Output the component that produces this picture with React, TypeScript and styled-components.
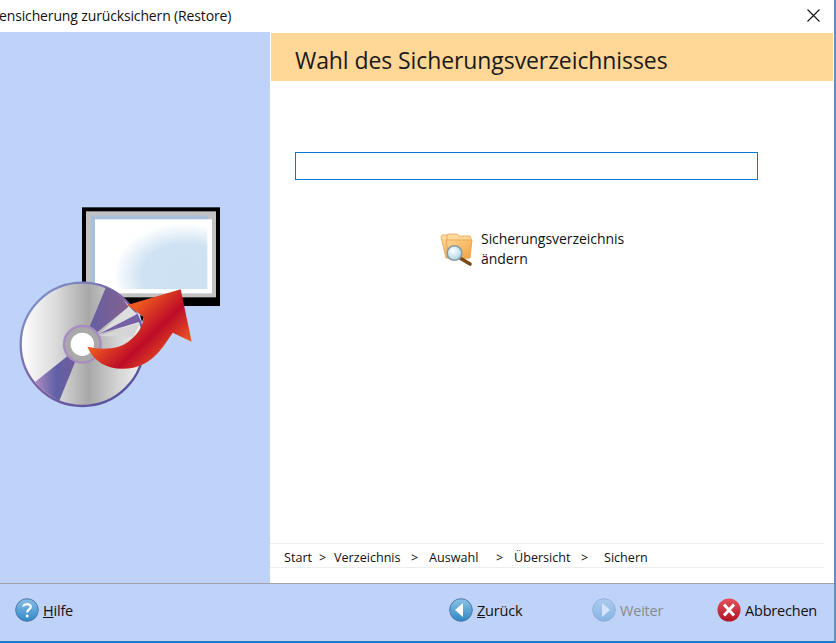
import styled, { createGlobalStyle } from "styled-components";

const GlobalStyle = createGlobalStyle`
  html, body, #root {
    margin: 0;
    padding: 0;
    width: 100%;
    height: 100%;
    overflow: hidden;
    background: #fff;
  }
`;

const BackIcon = ({ faded }: { faded?: boolean }) => (
  <svg width="24" height="24" viewBox="0 0 24 24" style={{ opacity: faded ? 0.38 : 1 }}>
    <defs>
      <linearGradient id={faded ? "navFaded" : "navBlue"} x1="0" y1="0" x2="0" y2="1">
        <stop offset="0" stopColor="#8cc4e8" />
        <stop offset="1" stopColor="#2f86c4" />
      </linearGradient>
    </defs>
    <circle cx="12" cy="12" r="11.3" fill={`url(#${faded ? "navFaded" : "navBlue"})`} stroke="#4f77ad" strokeWidth="1" />
    {faded ? (
      <path d="M10 5 L18 12 L10 19 Z" fill="#fff" />
    ) : (
      <path d="M14 5 L6 12 L14 19 Z" fill="#fff" />
    )}
  </svg>
);

const HelpIcon = () => (
  <svg width="24" height="24" viewBox="0 0 24 24">
    <defs>
      <linearGradient id="helpBlue" x1="0" y1="0" x2="0" y2="1">
        <stop offset="0" stopColor="#86bfe6" />
        <stop offset="1" stopColor="#3288c6" />
      </linearGradient>
    </defs>
    <circle cx="12" cy="12" r="11.3" fill="url(#helpBlue)" stroke="#4f77ad" strokeWidth="1" />
    <path
      d="M8.2 8.6 C8.6 5.6 15.8 5.2 15.8 8.8 C15.8 11.4 12.2 11.4 12.2 14.4"
      fill="none"
      stroke="#fff"
      strokeWidth="2.2"
    />
    <circle cx="12.2" cy="18" r="1.5" fill="#fff" />
  </svg>
);

const CancelIcon = () => (
  <svg width="24" height="24" viewBox="0 0 24 24">
    <defs>
      <linearGradient id="cancelRed" x1="0" y1="0" x2="0" y2="1">
        <stop offset="0" stopColor="#e4525c" />
        <stop offset="1" stopColor="#b01222" />
      </linearGradient>
    </defs>
    <circle cx="12" cy="12" r="11.5" fill="url(#cancelRed)" />
    <path d="M7 6.5 L17 17.5 M17 6.5 L7 17.5" stroke="#fff" strokeWidth="3" />
  </svg>
);

const FolderIcon = () => (
  <svg width="34" height="38" viewBox="0 0 34 38">
    <defs>
      <linearGradient id="folderBack" x1="0" y1="0" x2="0" y2="1">
        <stop offset="0" stopColor="#fedfa6" />
        <stop offset="1" stopColor="#f6ad52" />
      </linearGradient>
      <linearGradient id="folderFront" x1="0" y1="0" x2="1" y2="1">
        <stop offset="0" stopColor="#fed593" />
        <stop offset="1" stopColor="#f4a040" />
      </linearGradient>
      <radialGradient id="lens" cx="0.4" cy="0.35" r="0.7">
        <stop offset="0" stopColor="#ffffff" />
        <stop offset="1" stopColor="#a6d2e6" />
      </radialGradient>
    </defs>
    <path d="M1 8 L2 6 L8 6 L10 8 L18 8 L18 29 L6 29 Z" fill="url(#folderBack)" stroke="#eba048" strokeWidth="0.8" />
    <path d="M7 7 L8 5 L17 5 L19 7 L30 7 L31.5 11 L29 29 L8 29 Z" fill="url(#folderBack)" stroke="#eba048" strokeWidth="0.8" />
    <path d="M6 11 L32 11 L30 29 L9 30 Z" fill="url(#folderFront)" stroke="#eba048" strokeWidth="0.8" />
    <path d="M20 29 L30 35" stroke="#7a4a1c" strokeWidth="3.6" strokeLinecap="round" />
    <circle cx="14.5" cy="24" r="7.3" fill="url(#lens)" stroke="#8a9aa2" strokeWidth="1.6" />
  </svg>
);

const RestoreArt = () => (
  <svg width="210" height="210" viewBox="45 30 630 630">
    <defs>
      <radialGradient id="screenGlow" cx="0.76" cy="0.78" r="0.78">
        <stop offset="0" stopColor="#cde1f2" />
        <stop offset="0.6" stopColor="#cfe2f3" />
        <stop offset="1" stopColor="#ffffff" />
      </radialGradient>
      <linearGradient id="silver" x1="0" y1="0" x2="1" y2="0">
        <stop offset="0" stopColor="#ffffff" />
        <stop offset="0.28" stopColor="#dcdcdc" />
        <stop offset="0.55" stopColor="#a8a8a8" />
        <stop offset="0.8" stopColor="#d6d6d6" />
        <stop offset="1" stopColor="#f2f2f2" />
      </linearGradient>
      <linearGradient id="wedgeLow" x1="0" y1="0" x2="1" y2="0">
        <stop offset="0" stopColor="#ad8cc2" />
        <stop offset="0.45" stopColor="#5f60a6" />
        <stop offset="1" stopColor="#7a5a98" />
      </linearGradient>
      <linearGradient id="wedgeTop" x1="0" y1="0" x2="1" y2="0">
        <stop offset="0" stopColor="#5f60a6" />
        <stop offset="1" stopColor="#85608f" />
      </linearGradient>
      <linearGradient id="rim" x1="0" y1="0" x2="1" y2="1">
        <stop offset="0" stopColor="#7ea0d0" />
        <stop offset="0.5" stopColor="#7a5ea4" />
        <stop offset="1" stopColor="#4a4e9c" />
      </linearGradient>
      <linearGradient id="arrow" gradientUnits="userSpaceOnUse" x1="425" y1="335" x2="555" y2="470">
        <stop offset="0" stopColor="#ec5620" />
        <stop offset="0.5" stopColor="#bd0c28" />
        <stop offset="1" stopColor="#ee5a20" />
      </linearGradient>
    </defs>

    <rect x="246" y="52" width="414" height="296" fill="#000" />
    <rect x="258" y="64" width="390" height="258" fill="#c2c2c2" />
    <rect x="272" y="76" width="350" height="220" fill="#a9c0da" />
    <rect x="285" y="88" width="351" height="222" fill="#fff" />
    <rect x="345" y="100" width="277" height="197" fill="url(#screenGlow)" />

    <circle cx="247" cy="463" r="185" fill="url(#silver)" stroke="url(#rim)" strokeWidth="7" />
    <path d="M247 463 L318 291 Q360 310 386 350 Z" fill="url(#wedgeTop)" />
    <path d="M247 463 L105 576 Q135 612 178 632 Z" fill="url(#wedgeLow)" />
    <path d="M290 440 L386 350 L412 372 Z" fill="#dedede" />
    <path d="M296 432 L412 372 L420 395 Z" fill="#7562a6" />
    <path d="M298 438 L420 398 L400 440 Z" fill="#d6d6d6" />
    <path d="M420 375 L432 380 L426 396 Z" fill="#000" />
    <circle cx="247" cy="463" r="55" fill="#a9a9a9" stroke="#a88cc2" strokeWidth="7" />
    <circle cx="247" cy="463" r="35" fill="#fff" />

    <path
      d="M262 470 C310 482 360 475 385 455 C415 432 432 405 430 380 L382 345 L542 298 L575 455 L518 428 C490 470 460 520 400 533 C340 545 285 525 262 470 Z"
      fill="url(#arrow)"
    />
  </svg>
);

const steps = [
  { label: "Start", width: 35 },
  { label: ">", width: 15 },
  { label: "Verzeichnis", width: 77 },
  { label: ">", width: 18 },
  { label: "Auswahl", width: 67 },
  { label: ">", width: 18 },
  { label: "Übersicht", width: 67 },
  { label: ">", width: 23 },
  { label: "Sichern", width: 50 },
];

function App() {
  return (
    <>
      <GlobalStyle />
      <Window>
        <TitleBar>
          <TitleText>ensicherung zurücksichern (Restore)</TitleText>
          <CloseButton>
            <svg width="13" height="13" viewBox="0 0 13 13">
              <path d="M0.5 0.5 L12.5 12.5 M12.5 0.5 L0.5 12.5" stroke="#111" strokeWidth="1.1" />
            </svg>
          </CloseButton>
        </TitleBar>
        <Body>
          <Sidebar>
            <RestoreArt />
          </Sidebar>
          <Main>
            <Banner>Wahl des Sicherungsverzeichnisses</Banner>
            <PathInput readOnly value="" />
            <ChangeLink>
              <FolderIcon />
              <ChangeLabel>Sicherungsverzeichnis ändern</ChangeLabel>
            </ChangeLink>
            <Breadcrumb>
              {steps.map((s, i) => (
                <Step key={i} $width={s.width}>
                  {s.label}
                </Step>
              ))}
            </Breadcrumb>
          </Main>
        </Body>
        <Footer>
          <FooterButton $width={434}>
            <HelpIcon />
            <span>
              <u>H</u>ilfe
            </span>
          </FooterButton>
          <FooterButton $width={143}>
            <BackIcon />
            <span>
              <u>Z</u>urück
            </span>
          </FooterButton>
          <FooterButton $width={125} $disabled>
            <BackIcon faded />
            <span>Weiter</span>
          </FooterButton>
          <FooterButton>
            <CancelIcon />
            <span>Abbrechen</span>
          </FooterButton>
        </Footer>
      </Window>
    </>
  );
}

const Window = styled.div`
  display: flex;
  flex-direction: column;
  width: 836px;
  height: 643px;
  box-sizing: border-box;
  border-right: 2px solid #5f8fc4;
  border-bottom: 2px solid #1f78c8;
  font-family: "Open Sans", "Noto Sans", sans-serif;
  color: #111;
`;

const TitleBar = styled.div`
  display: flex;
  align-items: center;
  justify-content: space-between;
  height: 32px;
  flex-shrink: 0;
  box-sizing: border-box;
  padding: 0 14px 2px 0;
  background: #fff;
`;

const TitleText = styled.div`
  font-size: 14px;
  letter-spacing: -0.14px;
  margin-left: -1px;
  white-space: nowrap;
`;

const CloseButton = styled.div`
  display: flex;
  width: 13px;
  height: 13px;
`;

const Body = styled.div`
  display: flex;
  flex: 1;
  min-height: 0;
`;

const Sidebar = styled.div`
  width: 270px;
  flex-shrink: 0;
  box-sizing: border-box;
  padding: 168px 0 0 15px;
  background: #bfd2f8;
`;

const Main = styled.div`
  display: flex;
  flex: 1;
  flex-direction: column;
  padding: 1px 1px 0;
  background: #fff;
`;

const Banner = styled.div`
  display: flex;
  align-items: center;
  height: 48px;
  flex-shrink: 0;
  box-sizing: border-box;
  padding: 6px 0 0 24px;
  background: #ffd797;
  font-size: 23px;
  letter-spacing: -0.09px;
  color: #1a1a1a;
`;

const PathInput = styled.input`
  display: block;
  box-sizing: border-box;
  width: 463px;
  height: 28px;
  margin: 71px 0 0 24px;
  border: 1px solid #0078d7;
  outline: none;
  background: #fff;
`;

const ChangeLink = styled.div`
  display: flex;
  gap: 7px;
  margin: 49px 0 0 169px;
`;

const ChangeLabel = styled.div`
  width: 160px;
  font-size: 14px;
  letter-spacing: -0.05px;
  line-height: 20px;
`;

const Breadcrumb = styled.div`
  display: flex;
  align-items: center;
  height: 25px;
  box-sizing: border-box;
  margin: auto 9px 15px -1px;
  padding: 3px 0 0 14px;
  border-top: 1px solid #eeeeee;
  border-bottom: 1px solid #eeeeee;
  font-size: 12.6px;
`;

const Step = styled.span<{ $width: number }>`
  width: ${(p) => p.$width}px;
  flex-shrink: 0;
  white-space: nowrap;
`;

const Footer = styled.div`
  display: flex;
  align-items: center;
  height: 58px;
  flex-shrink: 0;
  box-sizing: border-box;
  padding: 0 0 5px 15px;
  border-top: 1px solid #a3a3a3;
  background: #bfd2f8;
`;

const FooterButton = styled.div<{ $width?: number; $disabled?: boolean }>`
  display: flex;
  align-items: center;
  gap: 4px;
  width: ${(p) => (p.$width ? `${p.$width + 4}px` : "auto")};
  margin-right: -4px;
  font-size: 14.5px;
  letter-spacing: -0.2px;
  color: ${(p) => (p.$disabled ? "#8a8a8a" : "#111")};
`;

export default App;
